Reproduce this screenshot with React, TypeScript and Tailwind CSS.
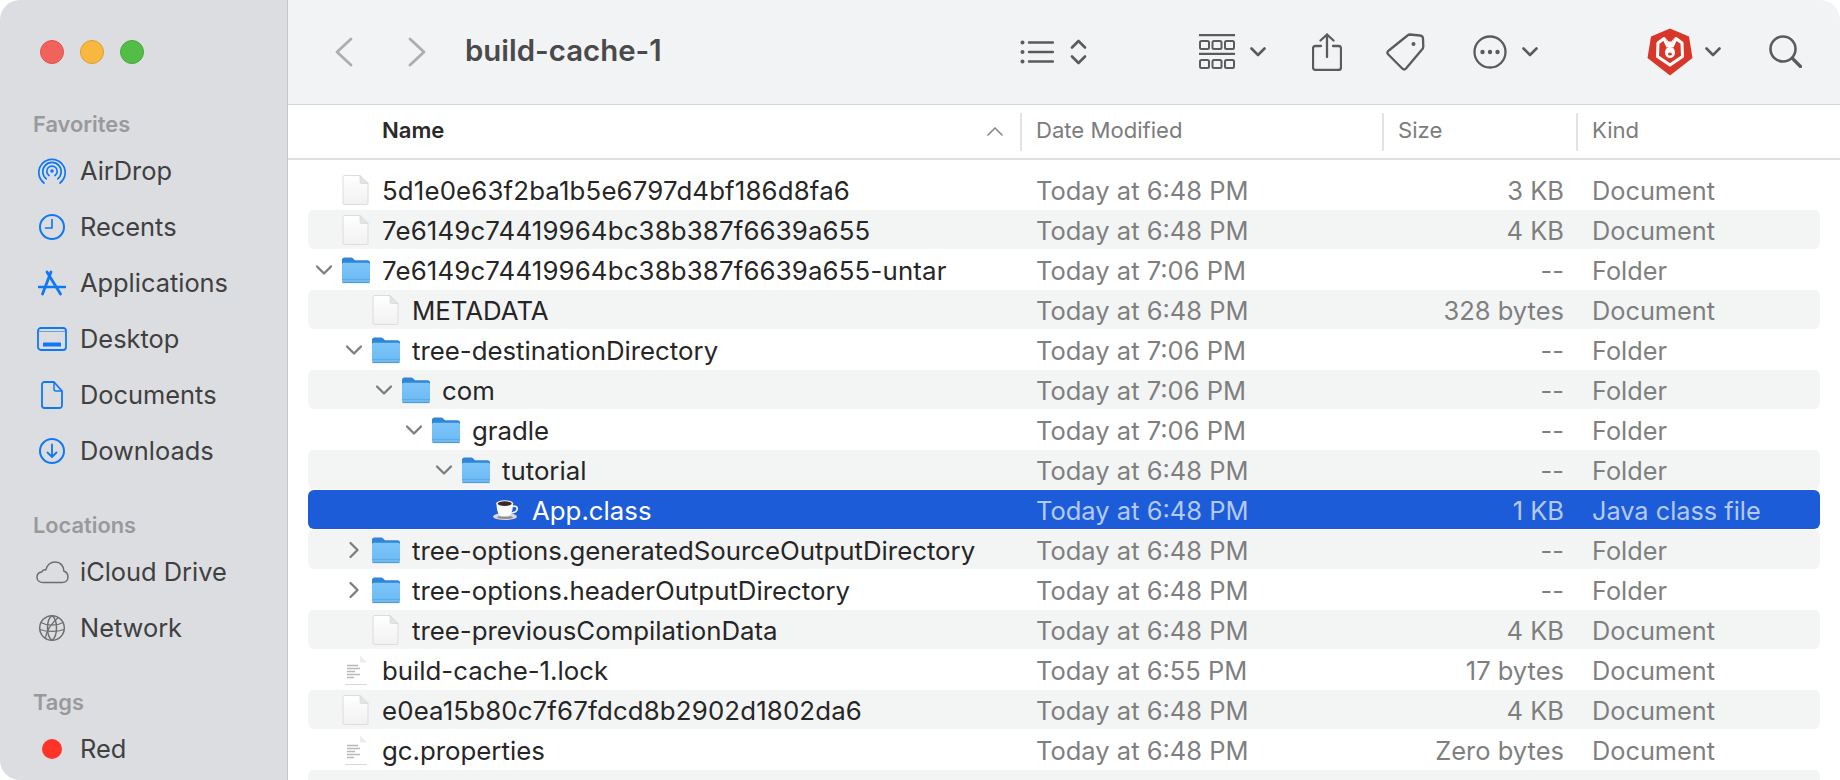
import React from "react";

const FONT = "font-['Inter','Noto_Sans',sans-serif]";

type Row = {
  name: string;
  date: string;
  size: string;
  kind: string;
  depth: 0 | 1 | 2 | 3 | 4 | 5;
  icon: "doc" | "folder" | "text" | "coffee" | "none";
  chevron?: "down" | "right";
  selected?: boolean;
};

const rows: Row[] = [
  { name: "5d1e0e63f2ba1b5e6797d4bf186d8fa6", date: "Today at 6:48 PM", size: "3 KB", kind: "Document", depth: 0, icon: "doc" },
  { name: "7e6149c74419964bc38b387f6639a655", date: "Today at 6:48 PM", size: "4 KB", kind: "Document", depth: 0, icon: "doc" },
  { name: "7e6149c74419964bc38b387f6639a655-untar", date: "Today at 7:06 PM", size: "--", kind: "Folder", depth: 0, icon: "folder", chevron: "down" },
  { name: "METADATA", date: "Today at 6:48 PM", size: "328 bytes", kind: "Document", depth: 1, icon: "doc" },
  { name: "tree-destinationDirectory", date: "Today at 7:06 PM", size: "--", kind: "Folder", depth: 1, icon: "folder", chevron: "down" },
  { name: "com", date: "Today at 7:06 PM", size: "--", kind: "Folder", depth: 2, icon: "folder", chevron: "down" },
  { name: "gradle", date: "Today at 7:06 PM", size: "--", kind: "Folder", depth: 3, icon: "folder", chevron: "down" },
  { name: "tutorial", date: "Today at 6:48 PM", size: "--", kind: "Folder", depth: 4, icon: "folder", chevron: "down" },
  { name: "App.class", date: "Today at 6:48 PM", size: "1 KB", kind: "Java class file", depth: 5, icon: "coffee", selected: true },
  { name: "tree-options.generatedSourceOutputDirectory", date: "Today at 6:48 PM", size: "--", kind: "Folder", depth: 1, icon: "folder", chevron: "right" },
  { name: "tree-options.headerOutputDirectory", date: "Today at 6:48 PM", size: "--", kind: "Folder", depth: 1, icon: "folder", chevron: "right" },
  { name: "tree-previousCompilationData", date: "Today at 6:48 PM", size: "4 KB", kind: "Document", depth: 1, icon: "doc" },
  { name: "build-cache-1.lock", date: "Today at 6:55 PM", size: "17 bytes", kind: "Document", depth: 0, icon: "text" },
  { name: "e0ea15b80c7f67fdcd8b2902d1802da6", date: "Today at 6:48 PM", size: "4 KB", kind: "Document", depth: 0, icon: "doc" },
  { name: "gc.properties", date: "Today at 6:48 PM", size: "Zero bytes", kind: "Document", depth: 0, icon: "text" },
  { name: "", date: "", size: "", kind: "", depth: 0, icon: "none" },
];

const indent = ["pl-[4px]", "pl-[34px]", "pl-[64px]", "pl-[94px]", "pl-[124px]", "pl-[154px]"];

function DocIcon() {
  return (
    <svg width="28" height="32" viewBox="0 0 28 32">
      <defs>
        <linearGradient id="docg" x1="0" y1="0" x2="0" y2="1">
          <stop offset="0" stopColor="#ffffff" />
          <stop offset="1" stopColor="#f1f1f1" />
        </linearGradient>
      </defs>
      <path d="M2.5 1.5H18L26 9.5V29a1.5 1.5 0 0 1-1.5 1.5h-22A1.5 1.5 0 0 1 1 29V3a1.5 1.5 0 0 1 1.5-1.5Z" fill="url(#docg)" stroke="#dcdcdc" strokeWidth="1" />
      <path d="M18 1.5V8a1.5 1.5 0 0 0 1.5 1.5H26Z" fill="#e4e4e4" stroke="#d6d6d6" strokeWidth="0.7" />
    </svg>
  );
}

function TextDocIcon() {
  return (
    <svg width="28" height="32" viewBox="0 0 28 32">
      <path d="M3 1.500H18L25 8.500V30H3Z" fill="#ffffff" />
      <path d="M18 1.500V8.500H25Z" fill="#ececec" />
      <path d="M3 30.500H25" stroke="#d8d8d8" strokeWidth="1" />
      <path d="M5 11.500H16M5 14.500H18M5 17.500H13M5 20.500H18M5 23.500H12" stroke="#b8b8b8" strokeWidth="1.300" />
    </svg>
  );
}

function FolderIcon() {
  return (
    <svg width="30" height="28" viewBox="0 0 30 28">
      <defs>
        <linearGradient id="folg" x1="0" y1="0" x2="0" y2="1">
          <stop offset="0" stopColor="#7cc5f9" />
          <stop offset="1" stopColor="#6cb9f3" />
        </linearGradient>
      </defs>
      <path d="M1 4a2.500 2.500 0 0 1 2.500-2.500H10c1 0 1.600.4 2.200 1l1.800 1.700H26.500A2.500 2.500 0 0 1 29 6.700V12H1Z" fill="#2f86d8" />
      <path d="M1 8.600A1.800 1.800 0 0 1 2.800 6.800H27.200A1.800 1.800 0 0 1 29 8.600V25a2 2 0 0 1-2 2H3a2 2 0 0 1-2-2Z" fill="url(#folg)" />
      <path d="M1 23.500H29" stroke="#5aa6e2" strokeWidth="0.800" />
      <path d="M1.500 26.600H28.500" stroke="#4f97d6" strokeWidth="1" />
    </svg>
  );
}

function CoffeeIcon() {
  return (
    <svg width="26" height="22" viewBox="0 0 26 22">
      <ellipse cx="12" cy="17.500" rx="12" ry="3.600" fill="#d9d9d9" />
      <ellipse cx="12" cy="18.400" rx="8" ry="1.600" fill="#8f8f8f" />
      <path d="M19 7.500c3.200-.9 5.600.3 5.200 2.600-.4 2.200-3.200 3.600-6.400 3.900" fill="none" stroke="#f2f2f2" strokeWidth="1.700" />
      <path d="M3.500 4.500h16.500c0 6-1.600 12.200-5 13h-6.500c-3.400-.8-5-7-5-13Z" fill="#fbfbfb" />
      <ellipse cx="11.700" cy="4.500" rx="8.500" ry="3.200" fill="#f5f5f5" />
      <ellipse cx="11.700" cy="4.600" rx="7" ry="2.300" fill="#3a2a22" />
    </svg>
  );
}

function Chevron({ dir }: { dir: "down" | "right" }) {
  return (
    <svg width="24" height="24" viewBox="0 0 24 24" fill="none" stroke="#7d7d7d" strokeWidth="2.300" strokeLinecap="round" strokeLinejoin="round">
      {dir === "down" ? <path d="M5 8.500 12 15.500 19 8.500" /> : <path d="M8.500 5 15.500 12 8.500 19" />}
    </svg>
  );
}

function FileRow({ r, striped }: { r: Row; striped: boolean }) {
  const bg = r.selected ? "bg-[#1d5cd9]" : striped ? "bg-[#f3f4f4]" : "bg-white";
  const nameColor = r.selected ? "text-white" : "text-[#262626]";
  const sub = r.selected ? "text-[#b5caf3]" : "text-[#7f7f7f]";
  const hash = /^[0-9a-f]{32}/.test(r.name) ? "tracking-[0.16px]" : "";
  return (
    <div className={`mb-px flex h-[39px] shrink-0 items-center rounded-[6px] text-[25.8px] leading-[39px] ${bg}`}>
      <div className={`flex w-[728px] items-center ${indent[r.depth]}`}>
        <div className="flex h-6 w-6 shrink-0 items-center justify-center">{r.chevron && <Chevron dir={r.chevron} />}</div>
        <div className="ml-1 mr-[10px] flex h-8 w-8 shrink-0 items-center justify-center">
          {r.icon === "doc" && <DocIcon />}
          {r.icon === "text" && <TextDocIcon />}
          {r.icon === "folder" && <FolderIcon />}
          {r.icon === "coffee" && <CoffeeIcon />}
        </div>
        <span className={`whitespace-nowrap pt-px ${hash} ${nameColor}`}>{r.name}</span>
      </div>
      <div className={`w-[350px] whitespace-nowrap pt-px text-[25.5px] ${sub}`}>{r.date}</div>
      <div className={`w-[178px] whitespace-nowrap pt-px text-right text-[25.5px] ${sub}`}>{r.size}</div>
      <div className={`ml-7 whitespace-nowrap pt-px text-[25.3px] ${sub}`}>{r.kind}</div>
    </div>
  );
}

const blue = "#0f78f5";

function AirDropIcon() {
  return (
    <svg width="28" height="28" viewBox="0 0 28 28" fill="none" stroke={blue} strokeWidth="1.700" strokeLinecap="round">
      <path d="M6 26A13.200 13.200 0 1 1 22 26" />
      <path d="M8.300 21.800A9.200 9.200 0 1 1 19.700 21.800" />
      <path d="M11 18.500A5.200 5.200 0 1 1 17 18.500" />
      <circle cx="14" cy="14" r="1.800" fill={blue} stroke="none" />
    </svg>
  );
}
function ClockIcon() {
  return (
    <svg width="28" height="28" viewBox="0 0 28 28" fill="none" stroke={blue} strokeWidth="2" strokeLinecap="round" strokeLinejoin="round">
      <circle cx="14" cy="14" r="12" />
      <path d="M14 6.500V15H7.500" strokeWidth="1.700" />
    </svg>
  );
}
function AppsIcon() {
  return (
    <svg width="28" height="26" viewBox="0 0 28 26" fill="none" stroke={blue} strokeWidth="2.800" strokeLinecap="round">
      <path d="M13 2 4.500 24" />
      <path d="M9 2 22.500 24" />
      <path d="M1 17H27" strokeWidth="2.600" />
    </svg>
  );
}
function DesktopIcon() {
  return (
    <svg width="30" height="24" viewBox="0 0 30 24" fill="none">
      <rect x="1" y="1" width="28" height="22" rx="3" stroke={blue} strokeWidth="1.800" />
      <path d="M2 4.500H28" stroke={blue} strokeWidth="0.600" />
      <rect x="6" y="15.500" width="18" height="4" fill={blue} />
    </svg>
  );
}
function DocumentIcon() {
  return (
    <svg width="22" height="28" viewBox="0 0 22 28" fill="none" stroke={blue} strokeWidth="1.800" strokeLinejoin="round">
      <path d="M3.500 1H13L21 10V24.500A2.500 2.500 0 0 1 18.500 27H3.500A2.500 2.500 0 0 1 1 24.500V3.500A2.500 2.500 0 0 1 3.500 1Z" />
      <path d="M13 1V8A2 2 0 0 0 15 10H21" strokeWidth="1.500" />
    </svg>
  );
}
function DownloadIcon() {
  return (
    <svg width="28" height="28" viewBox="0 0 28 28" fill="none" stroke={blue} strokeWidth="2" strokeLinecap="round" strokeLinejoin="round">
      <circle cx="14" cy="14" r="12" />
      <path d="M14 7.500V20M9.500 15.500 14 20 18.500 15.500" strokeWidth="1.800" />
    </svg>
  );
}
function CloudIcon() {
  return (
    <svg width="33" height="23" viewBox="0 0 33 23" fill="none" stroke="#6e6e6e" strokeWidth="1.500" strokeLinejoin="round">
      <path d="M7 21.500C3.500 21.500 1 19.200 1 16.200 1 13.300 3.200 11.300 5.800 11 6.300 9.300 8 8.500 9.700 9 11 4.500 14.500 1 19.200 1 24.500 1 27.800 5 27.800 10 30.300 11 32 13.300 32 16 32 19.300 29.500 21.500 26.300 21.500Z" />
    </svg>
  );
}
function GlobeIcon() {
  return (
    <svg width="28" height="28" viewBox="0 0 28 28" fill="none" stroke="#6e6e6e" strokeWidth="1.500">
      <circle cx="14" cy="14" r="12.300" />
      <path d="M14 1.700C8 6 8 22 14 26.300M14 1.700C20 6 20 22 14 26.300" />
      <path d="M3 8.500C9 12 19 12 25 8.500M2 15.500C9 18 19 18 26 15.500M20 3.500C13 10 8 18 7.500 24" strokeWidth="1.200" />
    </svg>
  );
}

function SideItem({ icon, label }: { icon: React.ReactNode; label: string }) {
  return (
    <div className="flex h-14 items-center">
      <div className="flex w-[40px] shrink-0 items-center justify-center">{icon}</div>
      <span className="ml-2 pt-px text-[25.4px] text-[#404040]">{label}</span>
    </div>
  );
}

function SideHead({ label, cls }: { label: string; cls: string }) {
  return <div className={`pl-px text-[21.8px] font-semibold leading-6 text-[#98999b] ${cls}`}>{label}</div>;
}

function Sidebar() {
  return (
    <aside className="flex h-full w-[288px] shrink-0 flex-col border-r border-[#c6c7c9] bg-[#dcdde0] pl-[32px]">
      <div className="ml-2 mt-[32px] flex h-[40px] items-center gap-4">
        <span className="h-6 w-6 rounded-full border border-[#dd5249] bg-[#f0625a]" />
        <span className="h-6 w-6 rounded-full border border-[#dd9f35] bg-[#f8b73f]" />
        <span className="h-6 w-6 rounded-full border border-[#45a83a] bg-[#52bd47]" />
      </div>
      <SideHead label="Favorites" cls="mt-[40px]" />
      <div className="mt-[7px]">
        <SideItem icon={<AirDropIcon />} label="AirDrop" />
        <SideItem icon={<ClockIcon />} label="Recents" />
        <SideItem icon={<AppsIcon />} label="Applications" />
        <SideItem icon={<DesktopIcon />} label="Desktop" />
        <SideItem icon={<DocumentIcon />} label="Documents" />
        <SideItem icon={<DownloadIcon />} label="Downloads" />
      </div>
      <SideHead label="Locations" cls="mt-[34px]" />
      <div className="mt-[7px]">
        <SideItem icon={<CloudIcon />} label="iCloud Drive" />
        <SideItem icon={<GlobeIcon />} label="Network" />
      </div>
      <SideHead label="Tags" cls="mt-[34px]" />
      <div className="mt-[7px]">
        <SideItem icon={<span className="h-5 w-5 rounded-full bg-[#ff3328]" />} label="Red" />
      </div>
    </aside>
  );
}

const ink = "#5b5b5d";

function SmallChevron({ cls }: { cls: string }) {
  return (
    <svg className={cls} width="16" height="10" viewBox="0 0 16 10" fill="none" stroke={ink} strokeWidth="2.600" strokeLinecap="round" strokeLinejoin="round">
      <path d="M1.500 1.500 8 8 14.500 1.500" />
    </svg>
  );
}

function Toolbar() {
  return (
    <div className="flex h-[105px] shrink-0 items-center border-b border-[#d4d5d7] bg-[#f2f3f5] pb-px pl-[47px] pr-[38px]">
      <svg width="18" height="30" viewBox="0 0 18 30" fill="none" stroke="#acadae" strokeWidth="2.800" strokeLinecap="round" strokeLinejoin="round">
        <path d="M16 2 2 15 16 28" />
      </svg>
      <svg className="ml-[55px]" width="18" height="30" viewBox="0 0 18 30" fill="none" stroke="#acadae" strokeWidth="2.800" strokeLinecap="round" strokeLinejoin="round">
        <path d="M2 2 16 15 2 28" />
      </svg>
      <div className="ml-[39px] text-[29.4px] font-semibold text-[#4a4a4a]">build-cache-1</div>
      <div className="ml-auto flex items-center">
        <svg width="34" height="24" viewBox="0 0 34 24" fill="none" stroke={ink} strokeWidth="2.400" strokeLinecap="round">
          <path d="M9 2.500H33M9 12H33M9 21.500H33" />
          <circle cx="2.500" cy="2.500" r="2" fill={ink} stroke="none" />
          <circle cx="2.500" cy="12" r="2" fill={ink} stroke="none" />
          <circle cx="2.500" cy="21.500" r="2" fill={ink} stroke="none" />
        </svg>
        <svg className="ml-[16px]" width="17" height="28" viewBox="0 0 17 28" fill="none" stroke={ink} strokeWidth="2.600" strokeLinecap="round" strokeLinejoin="round">
          <path d="M2 9.500 8.500 3 15 9.500M2 18.500 8.500 25 15 18.500" />
        </svg>
        <svg className="ml-[112px]" width="36" height="36" viewBox="0 0 36 36" fill="none" stroke={ink} strokeWidth="2">
          <path d="M0 1.200H36M0 19.800H36" strokeWidth="2.200" />
          <rect x="1" y="7" width="9" height="8" rx="1.500" />
          <rect x="13.500" y="7" width="9" height="8" rx="1.500" />
          <rect x="26" y="7" width="9" height="8" rx="1.500" />
          <rect x="1" y="26" width="9" height="8" rx="1.500" />
          <rect x="13.500" y="26" width="9" height="8" rx="1.500" />
          <rect x="26" y="26" width="9" height="8" rx="1.500" />
        </svg>
        <SmallChevron cls="ml-[15px]" />
        <svg className="ml-[46px]" width="30" height="38" viewBox="0 0 30 38" fill="none" stroke={ink} strokeWidth="2.300" strokeLinecap="round" strokeLinejoin="round">
          <path d="M9 13H3.500A2.500 2.500 0 0 0 1 15.500V34.500A2.500 2.500 0 0 0 3.500 37H26.500A2.500 2.500 0 0 0 29 34.500V15.500A2.500 2.500 0 0 0 26.500 13H21" />
          <path d="M15 24V1.500M8.500 7.500 15 1.500 21.500 7.500" />
        </svg>
        <svg className="ml-[44px]" width="39" height="38" viewBox="0 0 39 38" fill="none" stroke={ink} strokeWidth="2.300" strokeLinejoin="round">
          <path d="M24 1.500 34 2.500A3 3 0 0 1 37 5.500L37.300 13.500A4 4 0 0 1 36 16.500L20 35.500A2.500 2.500 0 0 1 16.500 35.700L2.300 21.500A2.500 2.500 0 0 1 2.200 18L21.500 2.500A4 4 0 0 1 24 1.500Z" />
          <circle cx="27.500" cy="11" r="2" fill={ink} stroke="none" />
        </svg>
        <svg className="ml-[48px]" width="34" height="34" viewBox="0 0 34 34" fill="none">
          <circle cx="17" cy="17" r="15.500" stroke={ink} strokeWidth="2.300" />
          <circle cx="9.500" cy="17" r="2.200" fill={ink} />
          <circle cx="17" cy="17" r="2.200" fill={ink} />
          <circle cx="24.500" cy="17" r="2.200" fill={ink} />
        </svg>
        <SmallChevron cls="ml-[15px]" />
        <svg className="ml-[109px]" width="46" height="48" viewBox="0 0 46 48">
          <path d="M23 0.500 42 8.500 45.500 30 23 47.500 0.500 30 4 8.500Z" fill="#d9362a" />
          <path d="M11 15 17 10.500 20.500 18 25.500 18 29 10.500 35 15 35.500 28.500 23 37 10.500 28.500Z" fill="none" stroke="#ffffff" strokeWidth="3" strokeLinejoin="round" />
          <path d="M19 10 22 19H24L27 10 24.500 13.500H21.500Z" fill="#ffffff" />
          <ellipse cx="23" cy="24.500" rx="5" ry="5.500" fill="#ffffff" />
          <ellipse cx="23" cy="26" rx="2" ry="1.500" fill="#d9362a" />
        </svg>
        <SmallChevron cls="ml-[12px]" />
        <svg className="ml-[48px]" width="33" height="33" viewBox="0 0 33 33" fill="none" stroke={ink} strokeWidth="2.600" strokeLinecap="round">
          <circle cx="14" cy="14" r="12.500" />
          <path d="M23.500 23.500 31.500 31.500" strokeWidth="3.200" />
        </svg>
      </div>
    </div>
  );
}

function HeaderRow() {
  return (
    <div className="flex h-[55px] shrink-0 items-center border-b-2 border-[#dfe0e0] bg-white text-[22.1px] text-[#7c7c7c]">
      <div className="flex h-[38px] w-[734px] shrink-0 items-center justify-between border-r-2 border-[#e3e3e3] pb-px pl-[94px] pr-[17px]">
        <span className="font-semibold text-[#2a2a2a]">Name</span>
        <svg width="16" height="10" viewBox="0 0 16 10" fill="none" stroke="#8a8a8a" strokeWidth="1.700" strokeLinecap="round" strokeLinejoin="round">
          <path d="M1 9 8 2 15 9" />
        </svg>
      </div>
      <div className="flex h-[38px] w-[362px] shrink-0 items-center border-r-2 border-[#e3e3e3] pb-px pl-[14px]">Date Modified</div>
      <div className="flex h-[38px] w-[194px] shrink-0 items-center border-r-2 border-[#e3e3e3] pb-px pl-[14px]">Size</div>
      <div className="flex h-[38px] items-center pb-px pl-[14px]">Kind</div>
    </div>
  );
}

export default function App() {
  return (
    <div className={`h-[780px] w-[1840px] overflow-hidden bg-white ${FONT}`}>
      <div className="flex h-full w-full overflow-hidden rounded-[20px]">
        <Sidebar />
        <main className="flex min-w-0 flex-1 flex-col overflow-hidden bg-white">
          <Toolbar />
          <HeaderRow />
          <div className="flex min-h-0 flex-1 flex-col overflow-hidden px-5 pt-[10px]">
            {rows.map((r, i) => (
              <FileRow key={i} r={r} striped={i % 2 === 1} />
            ))}
          </div>
        </main>
      </div>
    </div>
  );
}
